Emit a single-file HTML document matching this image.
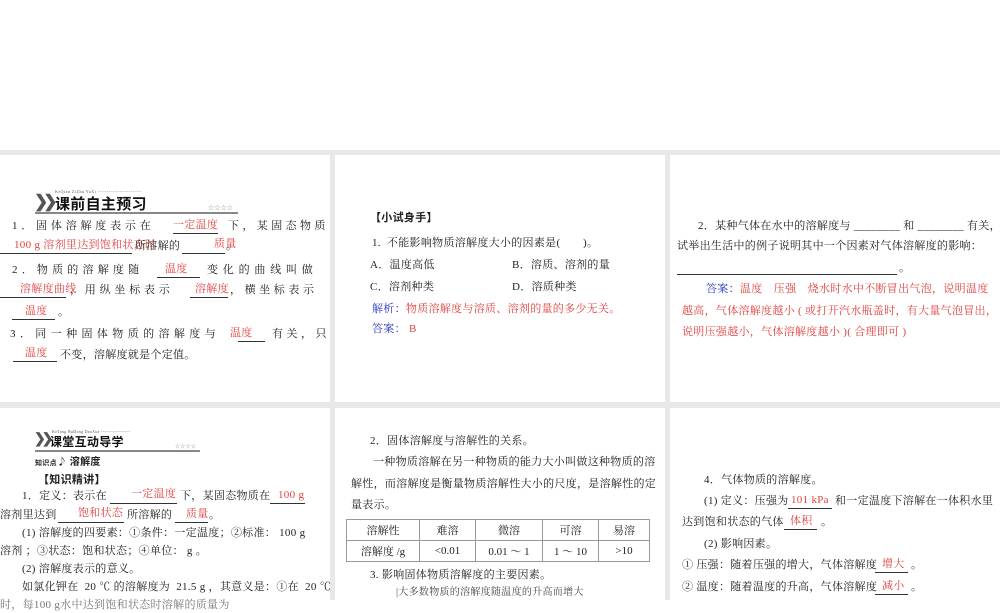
<!DOCTYPE html>
<html><head><meta charset="utf-8"><style>
*{margin:0;padding:0;box-sizing:border-box}
body{width:1000px;height:600px;position:relative;overflow:hidden;background:#fff;font-family:"Liberation Serif","Noto Serif CJK SC",serif;font-size:11px;color:#222}
.g{position:absolute;background:#e8e8e8}
.t{position:absolute;white-space:nowrap;line-height:16px;letter-spacing:0.3px}
.r{color:#e0413e}
.b{color:#2a35c0}
.u{position:absolute;height:1px;background:#333}
.sp{letter-spacing:3.8px}
.k{font-family:"Noto Serif CJK SC",serif}
table{position:absolute;border-collapse:collapse;font-size:11px}
td{border:1px solid #999;text-align:center;height:21px}
</style></head><body>
<div class="g" style="left:0;top:150px;width:1000px;height:5px"></div>
<div class="g" style="left:330px;top:150px;width:5px;height:450px"></div>
<div class="g" style="left:665px;top:150px;width:5px;height:450px"></div>
<div class="g" style="left:0;top:402px;width:1000px;height:6px"></div>

<!-- Panel 1 -->
<div class="t" style="left:34px;top:194px;font-size:17px;color:#555;font-weight:bold;letter-spacing:-5px">❯❯</div>
<div class="t" style="left:55px;top:189px;font-size:4px;line-height:6px;color:#555;letter-spacing:0.5px">KeQian ZiZhu YuXi ------------------------</div>
<div class="t" style="left:55px;top:196px;font-size:15px;font-weight:bold;font-family:'Noto Sans CJK SC',sans-serif;color:#111">课前自主预习</div>
<div style="position:absolute;left:35px;top:212px;width:203px;height:2px;background:#888"></div>
<div class="t" style="left:208px;top:201px;font-size:6px;color:#999">☆☆☆☆</div>

<div class="t sp" style="left:12px;top:218px">1．固体溶解度表示在</div>
<div class="u" style="left:173px;top:233px;width:45px"></div><div class="t r" style="left:173px;top:217px">一定温度</div>
<div class="t sp" style="left:228px;top:218px;letter-spacing:3.4px">下，某固态物质</div>
<div class="u" style="left:0;top:253px;width:132px"></div><div class="t r" style="left:14px;top:237px">100 g 溶剂里达到饱和状态时</div>
<div class="t" style="left:135px;top:238px">所溶解的</div>
<div class="u" style="left:182px;top:253px;width:43px"></div><div class="t r" style="left:214px;top:236px">质量</div><div class="t" style="left:226px;top:238px">。</div>
<div class="t sp" style="left:12px;top:262px;letter-spacing:4.2px">2．物质的溶解度随</div>
<div class="u" style="left:157px;top:277px;width:43px"></div><div class="t r" style="left:165px;top:261px">温度</div>
<div class="t sp" style="left:207px;top:262px;letter-spacing:4.8px">变化的曲线叫做</div>
<div class="u" style="left:0;top:297px;width:66px"></div><div class="t r" style="left:20px;top:281px">溶解度曲线</div>
<div class="t sp" style="left:70px;top:282px">，用纵坐标表示</div>
<div class="u" style="left:190px;top:297px;width:38px"></div><div class="t r" style="left:195px;top:281px">溶解度</div>
<div class="t sp" style="left:230px;top:282px;letter-spacing:3.6px">，横坐标表示</div>
<div class="u" style="left:12px;top:319px;width:43px"></div><div class="t r" style="left:25px;top:303px">温度</div><div class="t" style="left:58px;top:304px">。</div>
<div class="t sp" style="left:10px;top:326px;letter-spacing:4.4px">3．同一种固体物质的溶解度与</div>
<div class="u" style="left:238px;top:341px;width:27px"></div><div class="t r" style="left:230px;top:325px">温度</div>
<div class="t sp" style="left:272px;top:326px;letter-spacing:3.5px">有关，只</div>
<div class="u" style="left:13px;top:361px;width:44px"></div><div class="t r" style="left:25px;top:345px">温度</div>
<div class="t" style="left:60px;top:347px">不变，溶解度就是个定值。</div>

<!-- Panel 2 -->
<div class="t" style="left:370px;top:209px;font-weight:bold;font-family:'Noto Sans CJK SC',sans-serif">【小试身手】</div>
<div class="t" style="left:372px;top:235px">1.&nbsp; 不能影响物质溶解度大小的因素是(　　)。</div>
<div class="t" style="left:370px;top:257px">A．温度高低</div><div class="t" style="left:512px;top:257px">B．溶质、溶剂的量</div>
<div class="t" style="left:370px;top:279px">C．溶剂种类</div><div class="t" style="left:512px;top:279px">D．溶质种类</div>
<div class="t" style="left:372px;top:300px"><span class="b">解析：</span><span class="r k">物质溶解度与溶质、溶剂的量的多少无关。</span></div>
<div class="t" style="left:372px;top:321px"><span class="b">答案：</span> <span class="r">B</span></div>

<!-- Panel 3 -->
<div class="t" style="left:698px;top:218px">2．某种气体在水中的溶解度与 ________ 和 ________ 有关，</div>
<div class="t" style="left:677px;top:238px">试举出生活中的例子说明其中一个因素对气体溶解度的影响：</div>
<div class="u" style="left:677px;top:274px;width:220px"></div><div class="t" style="left:899px;top:260px">。</div>
<div class="t" style="left:706px;top:281px"><span class="b">答案：</span><span class="r">温度　压强　烧水时水中不断冒出气泡，说明温度</span></div>
<div class="t r" style="left:682px;top:303px">越高，气体溶解度越小 ( 或打开汽水瓶盖时，有大量气泡冒出，</div>
<div class="t r" style="left:682px;top:324px">说明压强越小，气体溶解度越小 )( 合理即可 )</div>

<!-- Panel 4 -->
<div class="t" style="left:34px;top:432px;font-size:14px;color:#555;font-weight:bold;letter-spacing:-4px">❯❯</div>
<div class="t" style="left:52px;top:429px;font-size:4px;line-height:6px;color:#555">KeTang HuDong DaoXue ------------------</div>
<div class="t" style="left:50px;top:434px;font-size:12px;font-weight:bold;font-family:'Noto Sans CJK SC',sans-serif;color:#111">课堂互动导学</div>
<div style="position:absolute;left:35px;top:450px;width:165px;height:2px;background:#888"></div>
<div class="t" style="left:175px;top:440px;font-size:5px;color:#999">☆☆☆☆</div>
<div class="t" style="left:35px;top:453px;font-size:10px;font-weight:bold;font-family:'Noto Sans CJK SC',sans-serif"><span style="font-size:7px">知识点</span>♪ 溶解度</div>
<div class="t" style="left:38px;top:471px;font-weight:bold;font-family:'Noto Sans CJK SC',sans-serif">【知识精讲】</div>
<div class="t" style="left:22px;top:488px">1．定义：表示在</div>
<div class="u" style="left:110px;top:503px;width:67px"></div><div class="t r" style="left:131px;top:486px">一定温度</div>
<div class="t" style="left:180px;top:488px">下，某固态物质在</div>
<div class="u" style="left:270px;top:503px;width:35px"></div><div class="t r" style="left:278px;top:487px">100 g</div>
<div class="t" style="left:0;top:507px">溶剂里达到</div>
<div class="u" style="left:58px;top:522px;width:66px"></div><div class="t r" style="left:78px;top:505px">饱和状态</div>
<div class="t" style="left:127px;top:507px">所溶解的</div>
<div class="u" style="left:175px;top:522px;width:33px"></div><div class="t r" style="left:186px;top:506px">质量</div><div class="t" style="left:209px;top:507px">。</div>
<div class="t" style="left:22px;top:525px">(1) 溶解度的四要素：①条件：一定温度；②标准： 100 g</div>
<div class="t" style="left:0;top:543px">溶剂 ；③状态：饱和状态；④单位： g 。</div>
<div class="t" style="left:22px;top:561px">(2) 溶解度表示的意义。</div>
<div class="t" style="left:22px;top:579px">如氯化钾在 &nbsp;20 ℃ 的溶解度为 &nbsp;21.5 g ，其意义是：①在 &nbsp;20 ℃</div>
<div class="t" style="left:0;top:597px;color:#777">时，每100 g水中达到饱和状态时溶解的质量为</div>

<!-- Panel 5 -->
<div class="t" style="left:370px;top:433px">2．固体溶解度与溶解性的关系。</div>
<div class="t" style="left:373px;top:454px">一种物质溶解在另一种物质的能力大小叫做这种物质的溶</div>
<div class="t" style="left:351px;top:476px">解性，而溶解度是衡量物质溶解性大小的尺度，是溶解性的定</div>
<div class="t" style="left:351px;top:497px">量表示。</div>
<table style="left:346px;top:519px;width:304px">
<tr><td style="width:73px">溶解性</td><td style="width:56px">难溶</td><td style="width:67px">微溶</td><td style="width:56px">可溶</td><td>易溶</td></tr>
<tr><td>溶解度 /g</td><td>&lt;0.01</td><td>0.01 ～ 1</td><td>1 ～ 10</td><td>&gt;10</td></tr>
</table>
<div class="t" style="left:370px;top:567px">3. 影响固体物质溶解度的主要因素。</div>
<div class="t" style="left:396px;top:585px;font-size:10px;color:#444">|大多数物质的溶解度随温度的升高而增大</div>

<!-- Panel 6 -->
<div class="t" style="left:704px;top:472px">4．气体物质的溶解度。</div>
<div class="t" style="left:704px;top:493px">(1) 定义：压强为</div>
<div class="u" style="left:788px;top:508px;width:44px"></div><div class="t r" style="left:791px;top:492px">101 kPa</div>
<div class="t" style="left:835px;top:493px">和一定温度下溶解在一体积水里</div>
<div class="t" style="left:682px;top:514px">达到饱和状态的气体</div>
<div class="u" style="left:784px;top:529px;width:33px"></div><div class="t r" style="left:790px;top:513px">体积</div><div class="t" style="left:821px;top:514px">。</div>
<div class="t" style="left:704px;top:536px">(2) 影响因素。</div>
<div class="t" style="left:682px;top:557px">① 压强：随着压强的增大，气体溶解度</div>
<div class="u" style="left:875px;top:572px;width:33px"></div><div class="t r" style="left:882px;top:556px">增大</div><div class="t" style="left:911px;top:557px">。</div>
<div class="t" style="left:682px;top:579px">② 温度：随着温度的升高，气体溶解度</div>
<div class="u" style="left:875px;top:594px;width:33px"></div><div class="t r" style="left:882px;top:578px">减小</div><div class="t" style="left:911px;top:579px">。</div>
</body></html>
